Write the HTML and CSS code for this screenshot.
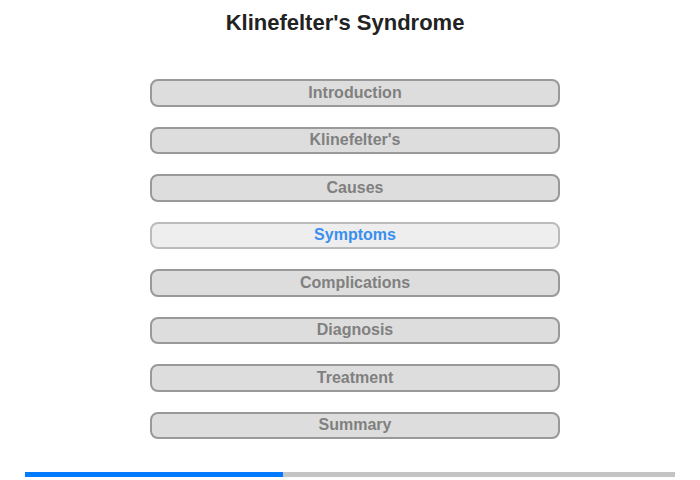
FILE: index.html
```html
<!DOCTYPE html>
<html lang="en">
<head>
  <meta charset="UTF-8" />
  <meta name="viewport" content="width=device-width, initial-scale=1.0" />
  <title>Klinefelter's Syndrome</title>
  <link rel="stylesheet" href="styles.css">
</head>
<body>

  <div class="pagina">
    <!-- Titulo -->
    <h1 class="titulo">Klinefelter's Syndrome</h1>

    <!-- Menu de secoes -->
    <div class="menu">
      <div class="botao">Introduction</div>
      <div class="botao">Klinefelter's</div>
      <div class="botao">Causes</div>
      <div class="botao ativo">Symptoms</div>
      <div class="botao">Complications</div>
      <div class="botao">Diagnosis</div>
      <div class="botao">Treatment</div>
      <div class="botao">Summary</div>
    </div>

    <!-- Progresso -->
    <div class="progresso">
      <div class="progresso-barra" style="width: 39.7%"></div>
    </div>
  </div>

</body>
</html>
```

FILE: styles.css
```css
body {
  margin: 0;
  padding: 0;
  font-family: 'Liberation Sans', Arial, sans-serif;
  background: #ffffff;
}

.pagina {
  padding: 0 25px;
}

.titulo {
  margin: 0;
  padding: 10px 10px 0 0;
  font-size: 22px;
  line-height: 26px;
  font-weight: bold;
  color: #222;
  text-align: center;
}

.menu {
  display: flex;
  flex-direction: column;
  align-items: center;
  gap: 20px;
  margin-top: 43px;
  padding-left: 10px;
}

.botao {
  box-sizing: border-box;
  width: 410px;
  height: 27.5px;
  display: flex;
  align-items: center;
  justify-content: center;
  background-color: #dddddd;
  border: 2px solid #999999;
  border-radius: 8px;
  color: #808080;
  font-size: 16px;
  font-weight: bold;
}

.botao.ativo {
  background-color: #eeeeee;
  border-color: #bbbbbb;
  color: #3a8ff0;
}

.progresso {
  margin-top: 33px;
  height: 5px;
  background-color: #c4c4c4;
}

.progresso-barra {
  height: 100%;
  background-color: #007bff;
}
```
